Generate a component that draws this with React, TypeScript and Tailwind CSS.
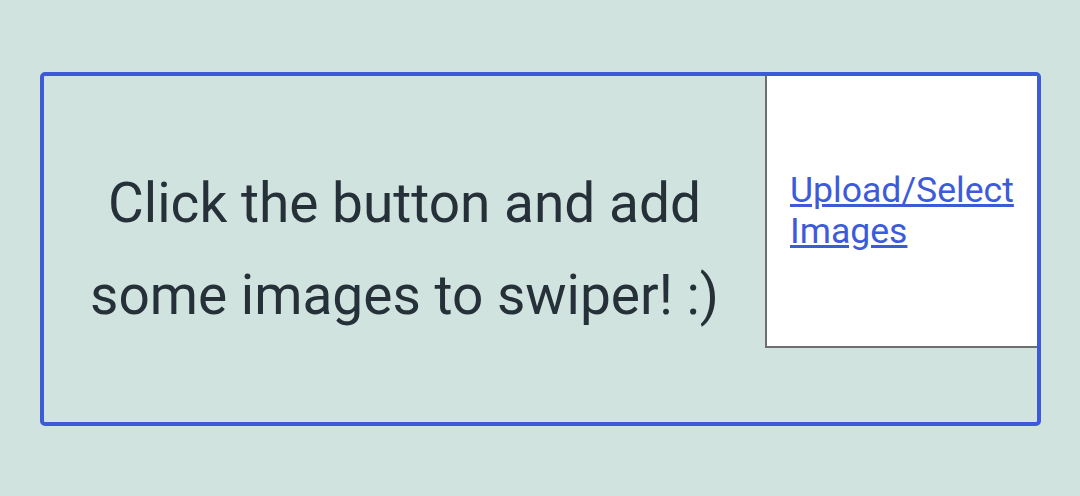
export default function App() {
  return (
    <div className="min-h-screen w-full bg-[#d1e3de] pt-[72px] px-10" style={{ fontFamily: 'Roboto, "Noto Sans", sans-serif' }}>
      <div className="flex h-[354px] w-[1001px] items-start rounded-[5px] border-4 border-[#3d5bd9]">
        <div className="flex h-full flex-1 items-center justify-center">
          <p className="text-center text-[55px] leading-[92px] text-[#263039]">
            Click the button and add
            <br />
            some images to swiper! :)
          </p>
        </div>
        <div className="flex h-[272px] w-[272px] items-center border-b-2 border-l-2 border-[#6e6e6e] bg-white pl-[23px]">
          <a href="#" className="text-[35.6px] leading-[41px] text-[#3d5bd9] underline">
            Upload/Select Images
          </a>
        </div>
      </div>
    </div>
  )
}
